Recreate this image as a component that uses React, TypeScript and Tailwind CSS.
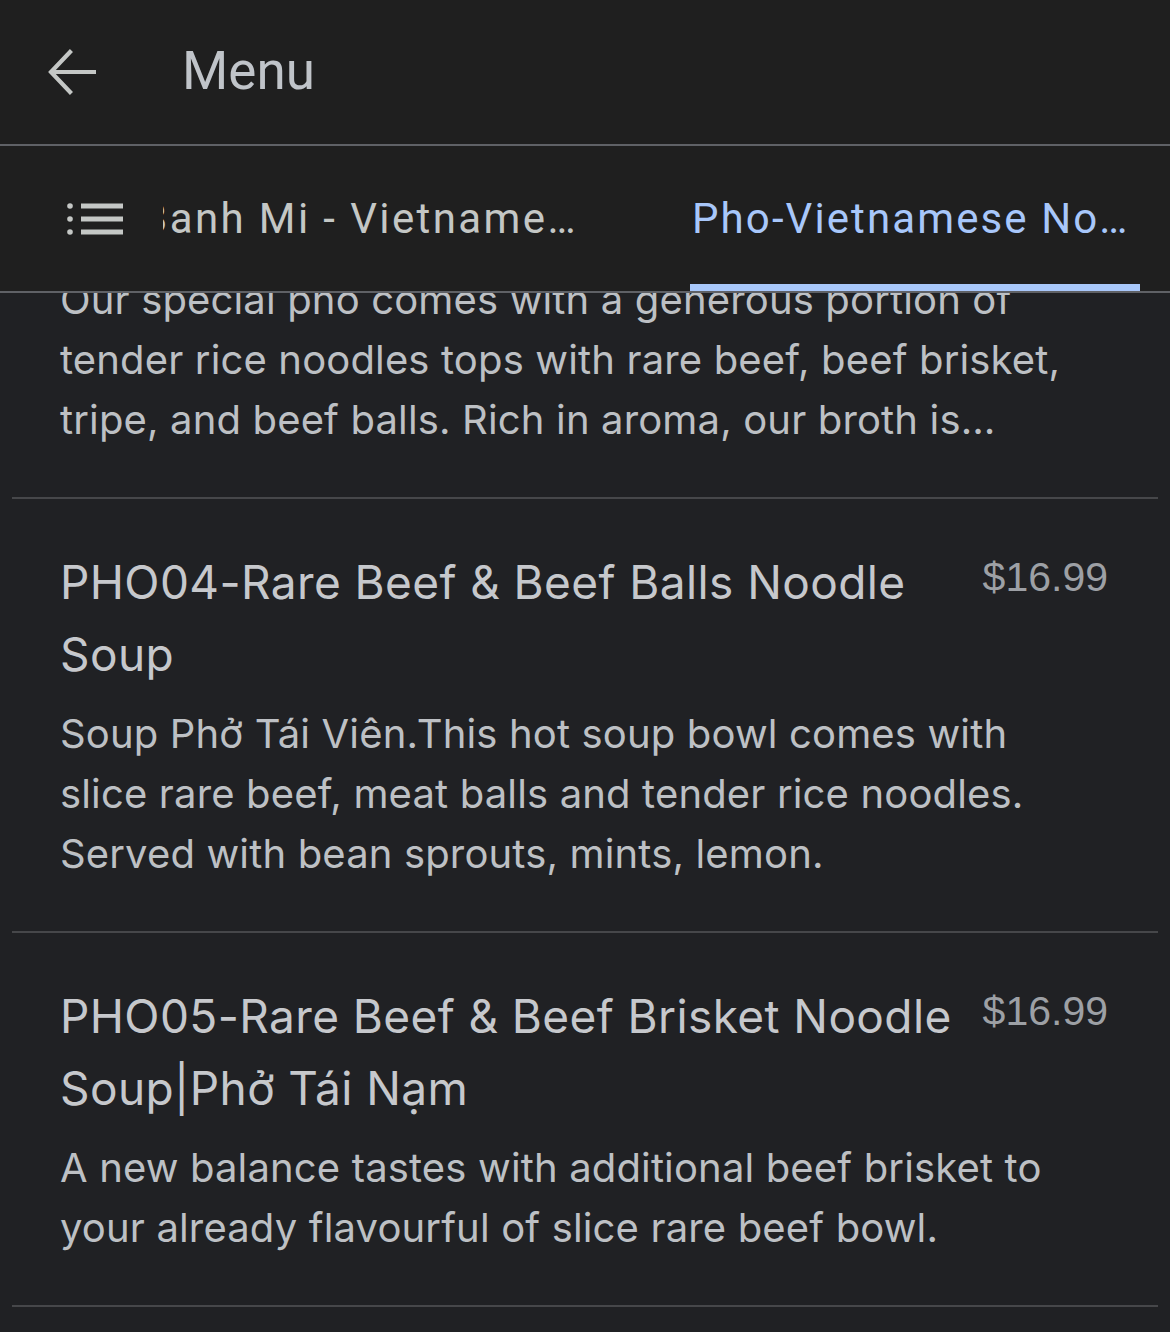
import React from "react";

type Item = {
  title: string;
  price?: string;
  desc: string[];
};

const items: Item[] = [
  {
    title: "PHO04-Rare Beef & Beef Balls Noodle Soup",
    price: "$16.99",
    desc: [
      "Soup Phở Tái Viên.This hot soup bowl comes with",
      "slice rare beef, meat balls and tender rice noodles.",
      "Served with bean sprouts, mints, lemon.",
    ],
  },
  {
    title: "PHO05-Rare Beef & Beef Brisket Noodle Soup|Phở Tái Nạm",
    price: "$16.99",
    desc: [
      "A new balance tastes with additional beef brisket to",
      "your already flavourful of slice rare beef bowl.",
    ],
  },
];

function BackArrow() {
  return (
    <svg width="48" height="48" viewBox="0 0 48 48" fill="none" stroke="#c4c7c5" strokeWidth="4.2" strokeLinecap="square">
      <path d="M4 24H46" />
      <path d="M22 4L3 24L22 44" />
    </svg>
  );
}

function ListIcon() {
  return (
    <svg width="58" height="34" viewBox="0 0 58 34" fill="#c4c7c5">
      <circle cx="3" cy="4" r="2.8" />
      <circle cx="3" cy="17" r="2.8" />
      <circle cx="3" cy="30" r="2.8" />
      <rect x="14" y="1.5" width="42" height="5" />
      <rect x="14" y="14.5" width="42" height="5" />
      <rect x="14" y="27.5" width="42" height="5" />
    </svg>
  );
}

function Divider() {
  return <div className="mx-3 h-[2px] bg-[#46474a]" />;
}

function MenuItem({ item }: { item: Item }) {
  return (
    <div className="px-[60px] pt-[47px] pb-[47px]">
      <div className="flex items-start justify-between">
        <div className="w-[905px] text-[46px] leading-[72px] tracking-[0.4px] text-[#c6c8cc]">{item.title}</div>
        <div className="pt-[6px] pr-[2px] font-['Liberation_Sans',Arial,sans-serif] text-[41px] leading-[50px] text-[#9da0a5]">
          {item.price}
        </div>
      </div>
      <div className="mt-[14px] text-[40px] leading-[60px] tracking-[0.15px] text-[#bdc0c4]">
        {item.desc.map((l) => (
          <div key={l} className="whitespace-nowrap">{l}</div>
        ))}
      </div>
    </div>
  );
}

export default function App() {
  return (
    <div className="flex h-[1332px] w-[1170px] flex-col overflow-hidden bg-[#202124] font-['Inter',sans-serif]">
      <header className="flex h-[144px] shrink-0 items-center bg-[#1f1f1f] font-['Roboto',sans-serif]">
        <div className="ml-[48px] flex">
          <BackArrow />
        </div>
        <h1 className="ml-[86px] text-[53px] font-normal text-[#c0c4c9]">Menu</h1>
      </header>
      <div className="h-[2px] shrink-0 bg-[#5f6166]" />

      <nav className="flex h-[145px] shrink-0 items-stretch bg-[#1f1f1f] font-['Roboto',sans-serif]">
        <div className="flex w-[163px] shrink-0 items-center pl-[67px]">
          <ListIcon />
        </div>
        <div className="flex flex-1 overflow-hidden">
          <div className="-ml-[35px] flex w-[450px] shrink-0 items-center justify-end text-[42px] tracking-[2.4px] text-[#c4c7c5] whitespace-nowrap">
            Banh Mi - Vietname…
          </div>
          <div className="ml-[112px] relative flex w-[450px] shrink-0 items-center text-[42px] tracking-[2.1px] text-[#a8c7fa] whitespace-nowrap">
            <span className="pl-[2px]">Pho-Vietnamese No…</span>
            <div className="absolute bottom-0 left-0 right-0 h-[7px] bg-[#a8c7fa]" />
          </div>
        </div>
      </nav>
      <div className="h-[2px] shrink-0 bg-[#5f6166]" />

      <main className="flex-1 overflow-hidden">
        <div className="-mt-[23px] px-[60px] pb-[47px] text-[40px] leading-[60px] tracking-[0.15px] text-[#bdc0c4]">
          <div className="whitespace-nowrap">Our special pho comes with a generous portion of</div>
          <div className="whitespace-nowrap">tender rice noodles tops with rare beef, beef brisket,</div>
          <div className="whitespace-nowrap">tripe, and beef balls. Rich in aroma, our broth is…</div>
        </div>
        <Divider />
        {items.map((it) => (
          <React.Fragment key={it.title}>
            <MenuItem item={it} />
            <Divider />
          </React.Fragment>
        ))}
      </main>
    </div>
  );
}
